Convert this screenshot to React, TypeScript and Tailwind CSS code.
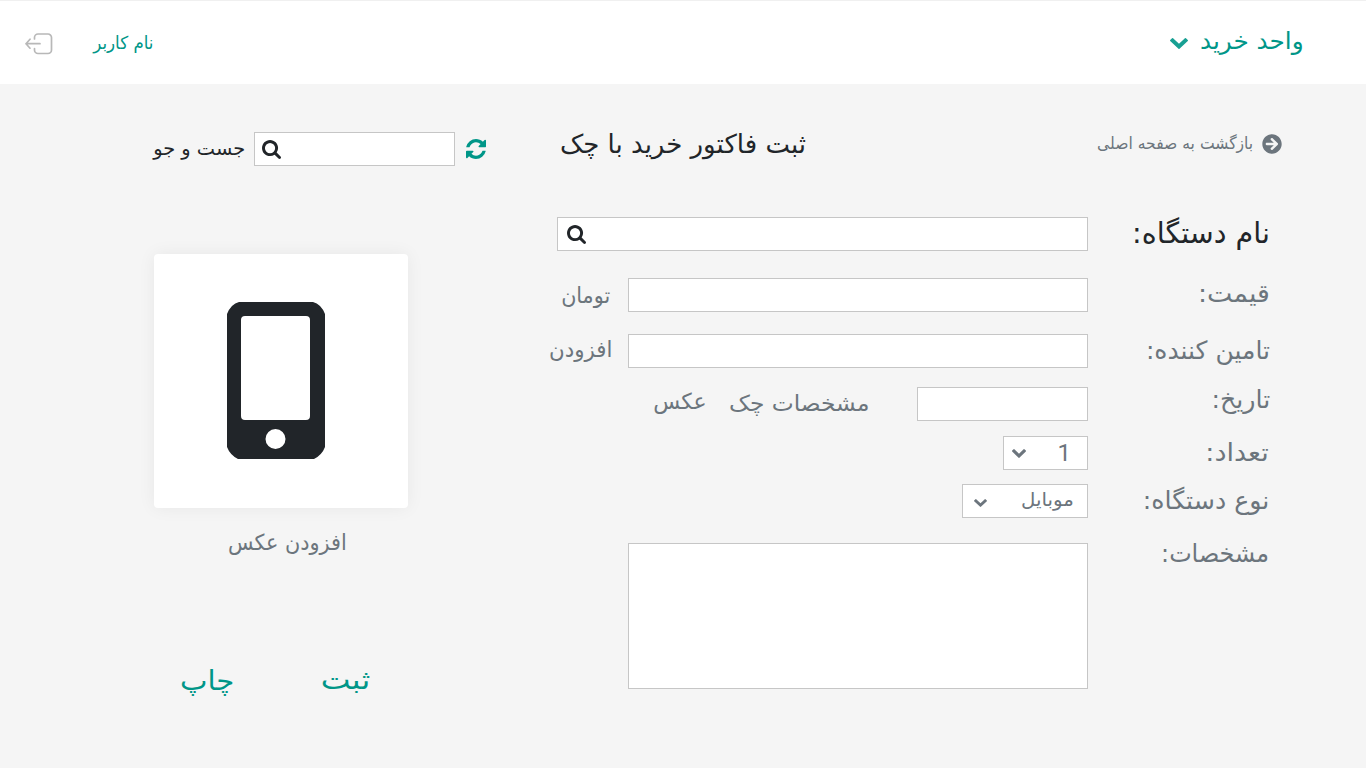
import type { ReactNode } from "react";
import { FaArrowCircleRight } from "react-icons/fa";

function Text({ className, children }: { className: string; children: ReactNode }) {
  return <span className={`block w-max origin-right whitespace-nowrap leading-[34px] ${className}`}>{children}</span>;
}

function FieldRow({ label, labelClass, className, children }: { label: string; labelClass: string; className: string; children: ReactNode }) {
  return (
    <div className={`flex items-start ${className}`}>
      <label className="block w-[182px] shrink-0">
        <Text className={labelClass}>{label}</Text>
      </label>
      {children}
    </div>
  );
}

const box = "block shrink-0 border border-[#c6c6c6] bg-white outline-none";

function ChevronIcon({ className }: { className: string }) {
  return (
    <svg viewBox="90 533 1612 1035" fill="currentColor" preserveAspectRatio="none" className={`shrink-0 ${className}`}>
      <path d="M1683 808l-742 741q-19 19-45 19t-45-19L109 808q-19-19-19-45.500t19-45.500l166-165q19-19 45-19t45 19l531 531 531-531q19-19 45-19t45 19l166 165q19 19 19 45.500t-19 45.500z" />
    </svg>
  );
}

function SearchIcon() {
  return (
    <svg viewBox="0 128 1664 1664" fill="#212529" className="size-[19px]">
      <path d="M1152 832q0-185-131.500-316.500T704 384 387.500 515.500 256 832t131.500 316.500T704 1280t316.500-131.500T1152 832zm512 832q0 52-38 90t-90 38q-54 0-90-38l-343-342q-179 124-399 124-143 0-273.500-55.500t-225-150-150-225T0 832t55.500-273.500 150-225 225-150T704 128t273.500 55.500 225 150 150 225T1408 832q0 220-124 399l343 343q37 37 37 90z" />
    </svg>
  );
}

function RefreshIcon() {
  return (
    <svg viewBox="0 128 1536 1536" fill="#009688" className="ml-px mr-px mt-[7px] size-5">
      <path d="M1511 1056q0 5-1 7-64 268-268 434.500T764 1664q-146 0-282.500-55T238 1452l-129 129q-19 19-45 19t-45-19-19-45v-448q0-26 19-45t45-19h448q26 0 45 19t19 45-19 45l-137 137q71 66 161 102t187 36q134 0 250-65t186-179q11-17 53-117 8-23 30-23h192q13 0 22.500 9.500t9.500 22.500zm25-800v448q0 26-19 45t-45 19h-448q-26 0-45-19t-19-45 19-45l138-138Q969 384 768 384q-134 0-250 65T332 628q-11 17-53 117-8 23-30 23H50q-13 0-22.500-9.500T18 736v-7q65-268 270-434.500T768 128q146 0 284 55.500T1297 340l130-129q19-19 45-19t45 19 19 45z" />
    </svg>
  );
}

function LogoutIcon() {
  return (
    <svg width="28" height="22" viewBox="0 0 28 22" fill="none" stroke="#b8b8b8" strokeWidth="1.7" strokeLinecap="round" strokeLinejoin="round">
      <path d="M9.500 6V4.500A3.500 3.500 0 0 1 13 1h10a3.500 3.500 0 0 1 3.500 3.500v12.500a3.500 3.500 0 0 1-3.500 3.500H13a3.500 3.500 0 0 1-3.500-3.500V15.500" />
      <path d="M15 10.700H1M5 6.200 1 10.700l4 4.500" />
    </svg>
  );
}

function PhoneIcon() {
  return (
    <svg width="98" height="157" viewBox="0 0 98 157">
      <path fill="#212529" fillRule="evenodd" d="M12 0H86Q94 2 98 12V145Q95 153 87 157H11Q3 153 0 145V12Q4 2 12 0ZM18 14Q14 14 14 18V114Q14 118 18 118H79Q83 118 83 114V18Q83 14 79 14ZM48.500 127a10 10 0 1 0 0 20a10 10 0 1 0 0-20Z" />
    </svg>
  );
}

export default function App() {
  return (
    <div dir="rtl" className="flex h-[768px] w-[1366px] flex-col overflow-hidden bg-[#f5f5f5] font-['DejaVu_Sans',sans-serif] text-[#6c757d]">
      <header className="flex h-[84px] shrink-0 items-start justify-between border-t border-[#f0f0f0] bg-white pl-[25px] pr-[62px] text-[#009688]">
        <button className="flex items-start gap-[15px] pt-[23px]">
          <Text className="scale-x-[1.03] text-[24px]">واحد خرید</Text>
          <ChevronIcon className="mt-[14px] h-[11px] w-[18px] opacity-90" />
        </button>
        <div className="flex items-start gap-10 pt-8">
          <Text className="-mt-[7px] -translate-x-px scale-x-[0.98] scale-y-[1.05] text-[17px]">نام کاربر</Text>
          <LogoutIcon />
        </div>
      </header>
      <main className="flex flex-1 items-start">
        <form className="w-[841px] shrink-0 pr-[84px] pt-[43px]">
          <div className="flex h-[90px] items-start">
            <a className="flex w-[476px] items-start gap-[9px]">
              <FaArrowCircleRight className="mt-[7px] size-5" />
              <Text className="scale-x-[0.975] scale-y-[1.05] text-[16px]">بازگشت به صفحه اصلی</Text>
            </a>
            <h1>
              <Text className="text-[26px] text-[#212529]">ثبت فاکتور خرید با چک</Text>
            </h1>
          </div>
          <div className="pr-3">
            <FieldRow label="نام دستگاه:" labelClass="-translate-y-px scale-x-[0.985] text-[29px] text-[#212529]" className="h-[61px]">
              <span className="flex h-[34px] w-[531px] items-center justify-end border border-[#c6c6c6] bg-white pl-[9px]">
                <SearchIcon />
              </span>
            </FieldRow>
            <FieldRow label="قیمت:" labelClass="-translate-y-px scale-x-[1.075] text-[25px]" className="h-14">
              <input className={`${box} h-[34px] w-[460px]`} />
              <Text className="mr-[18px] translate-y-px scale-x-[0.94] text-[22px]">تومان</Text>
            </FieldRow>
            <FieldRow label="تامین کننده:" labelClass="text-[25px]" className="h-[53px]">
              <input className={`${box} h-[34px] w-[460px]`} />
              <Text className="mr-[16px] -translate-y-px scale-x-[0.97] text-[22px]">افزودن</Text>
            </FieldRow>
            <FieldRow label="تاریخ:" labelClass="-translate-y-[4px] scale-x-[1.01] text-[25px]" className="h-[49px]">
              <input className={`${box} h-[34px] w-[171px]`} />
              <Text className="mr-12 scale-x-[1.06] text-[22px]">مشخصات چک</Text>
              <Text className="mr-[30px] -translate-y-[2px] text-[22px]">عکس</Text>
            </FieldRow>
            <FieldRow label="تعداد:" labelClass="-translate-x-px scale-x-[1.08] text-[25px]" className="h-12">
              <button type="button" className="flex h-[34px] w-[85px] items-center justify-between border border-[#c6c6c6] bg-white pl-2 pr-4">
                <span className="font-['Roboto',sans-serif] text-[24px]">1</span>
                <ChevronIcon className="h-[9px] w-[14px]" />
              </button>
            </FieldRow>
            <FieldRow label="نوع دستگاه:" labelClass="-translate-x-px scale-x-[1.01] text-[25px]" className="h-[59px]">
              <button type="button" className="flex h-[34px] w-[126px] items-center justify-between border border-[#c6c6c6] bg-white pl-[11px] pr-[13px]">
                <Text className="-translate-y-[2px] scale-x-[1.04] text-[19px]">موبایل</Text>
                <ChevronIcon className="mt-1 h-2 w-[13px]" />
              </button>
            </FieldRow>
            <FieldRow label="مشخصات:" labelClass="-translate-x-px -translate-y-[6px] scale-x-[0.955] text-[25px]" className="h-[146px]">
              <textarea className={`${box} h-[146px] w-[460px] resize-none`} />
            </FieldRow>
          </div>
        </form>
        <aside className="w-[525px] pr-[38px] pt-12">
          <div className="flex h-[122px] items-start">
            <RefreshIcon />
            <span className="mr-[10px] flex h-[34px] w-[201px] items-center justify-end border border-[#c6c6c6] bg-white pl-[7px]">
              <SearchIcon />
            </span>
            <Text className="mr-[9px] -translate-y-px scale-x-[1.02] text-[19px] text-[#212529]">جست و جو</Text>
          </div>
          <div className="mr-[79px] w-[254px]">
            <div className="h-[254px] rounded-[4px] bg-white pr-[83px] pt-12 shadow-[0_0_18px_rgba(0,0,0,0.06)]">
              <PhoneIcon />
            </div>
            <Text className="mr-[61px] mt-[17px] translate-y-px scale-x-[0.945] text-[22px]">افزودن عکس</Text>
            <div className="mr-[38px] mt-[104px] flex text-[#009688]">
              <button className="block w-[136px]"><Text className="scale-x-[1.17] text-[27px]">ثبت</Text></button>
              <button><Text className="translate-y-px scale-x-[1.08] text-[27px]">چاپ</Text></button>
            </div>
          </div>
        </aside>
      </main>
    </div>
  );
}
